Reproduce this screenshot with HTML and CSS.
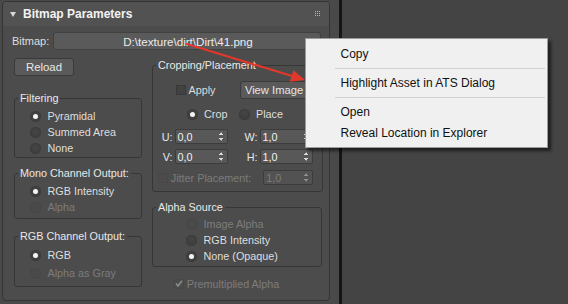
FILE: index.html
```html
<!DOCTYPE html>
<html lang="en">
<head>
    <meta charset="UTF-8">
    <title>Bitmap Parameters</title>
    <link rel="stylesheet" href="styles.css">
</head>
<body>
    <div class="screen">
        <!-- 왼쪽 롤아웃 패널 -->
        <div class="side">
            <div class="rollout">
                <div class="roll-head">
                    <svg class="tri" width="6" height="5" viewBox="0 0 6 5"><polygon points="0,0 6,0 3,5" fill="#d8d8d8"></polygon></svg>
                    <span class="roll-title">Bitmap Parameters</span>
                    <svg class="grip" width="6" height="6" viewBox="0 0 6 6" fill="#b5b5b5">
                        <rect x="0" y="0" width="1" height="1"></rect><rect x="2" y="0" width="1" height="1"></rect><rect x="4" y="0" width="1" height="1"></rect>
                        <rect x="0" y="2" width="1" height="1"></rect><rect x="2" y="2" width="1" height="1"></rect><rect x="4" y="2" width="1" height="1"></rect>
                        <rect x="0" y="4" width="1" height="1"></rect><rect x="2" y="4" width="1" height="1"></rect><rect x="4" y="4" width="1" height="1"></rect>
                    </svg>
                </div>

                <div class="roll-body">
                    <div class="bm-row">
                        <span class="bm-label">Bitmap:</span>
                        <div class="path-field">D:\texture\dirt\Dirt\41.png</div>
                    </div>

                    <div class="cols">
                        <!-- 왼쪽 컬럼 -->
                        <div class="col">
                            <div class="btn reload">Reload</div>

                            <fieldset class="group filtering">
                                <legend>Filtering</legend>
                                <div class="gbody">
                                    <div class="radio-row"><span class="radio on"></span>Pyramidal</div>
                                    <div class="radio-row"><span class="radio"></span>Summed Area</div>
                                    <div class="radio-row"><span class="radio"></span>None</div>
                                </div>
                            </fieldset>

                            <fieldset class="group mono">
                                <legend>Mono Channel Output:</legend>
                                <div class="gbody">
                                    <div class="radio-row"><span class="radio on"></span>RGB Intensity</div>
                                    <div class="radio-row off"><span class="radio"></span>Alpha</div>
                                </div>
                            </fieldset>

                            <fieldset class="group rgb">
                                <legend>RGB Channel Output:</legend>
                                <div class="gbody">
                                    <div class="radio-row tall"><span class="radio on"></span>RGB</div>
                                    <div class="radio-row tall off"><span class="radio"></span>Alpha as Gray</div>
                                </div>
                            </fieldset>
                        </div>

                        <!-- 오른쪽 컬럼 -->
                        <div class="col">
                            <fieldset class="group crop">
                                <legend>Cropping/Placement</legend>
                                <div class="gbody">
                                    <div class="apply-row">
                                        <div class="check-cell"><span class="check"></span>Apply</div>
                                        <div class="btn view-btn">View Image</div>
                                    </div>
                                    <div class="crop-row">
                                        <div class="radio-row"><span class="radio on"></span>Crop</div>
                                        <div class="radio-row"><span class="radio"></span>Place</div>
                                    </div>
                                    <div class="spin-row">
                                        <span class="spin-label">U:</span>
                                        <div class="spin"><span>0,0</span><span class="arrows"></span></div>
                                        <span class="spin-label">W:</span>
                                        <div class="spin"><span>1,0</span><span class="arrows"></span></div>
                                    </div>
                                    <div class="spin-row second">
                                        <span class="spin-label">V:</span>
                                        <div class="spin"><span>0,0</span><span class="arrows"></span></div>
                                        <span class="spin-label">H:</span>
                                        <div class="spin"><span>1,0</span><span class="arrows"></span></div>
                                    </div>
                                    <div class="jitter-row off">
                                        <div class="check-cell"><span class="check"></span>Jitter Placement:</div>
                                        <div class="spin"><span>1,0</span><span class="arrows"></span></div>
                                    </div>
                                </div>
                            </fieldset>

                            <fieldset class="group alpha">
                                <legend>Alpha Source</legend>
                                <div class="gbody">
                                    <div class="radio-row off"><span class="radio"></span>Image Alpha</div>
                                    <div class="radio-row"><span class="radio"></span>RGB Intensity</div>
                                    <div class="radio-row"><span class="radio on"></span>None (Opaque)</div>
                                </div>
                            </fieldset>

                            <div class="premult off">
                                <span class="check ticked">
                                    <svg width="8" height="7" viewBox="0 0 8 7"><polyline points="1,3.5 3,6 7,0.8" fill="none" stroke="#8c8c8c" stroke-width="1.6"></polyline></svg>
                                </span>Premultiplied Alpha
                            </div>
                        </div>
                    </div>
                </div>
            </div>
        </div>

        <!-- 뷰포트 영역 -->
        <div class="view"></div>

        <!-- 우클릭 메뉴 -->
        <div class="menu">
            <div class="menu-item">Copy</div>
            <div class="menu-sep"></div>
            <div class="menu-item">Highlight Asset in ATS Dialog</div>
            <div class="menu-sep"></div>
            <div class="menu-item">Open</div>
            <div class="menu-item">Reveal Location in Explorer</div>
        </div>

        <!-- 빨간 화살표 -->
        <svg class="arrow" width="568" height="304" viewBox="0 0 568 304">
            <line x1="187" y1="44" x2="292" y2="76" stroke="#e2382a" stroke-width="2.2" stroke-linecap="round"></line>
            <polygon points="305,80 289.9,81.8 293.4,70.2" fill="#e2382a"></polygon>
        </svg>
    </div>
</body>
</html>
```

FILE: styles.css
```css
html,body{
    margin: 0;
    padding: 0;
}
body{
    background: #444;
    font-family: "Liberation Sans", Arial, sans-serif;
    font-size: 10.8px;
    color: #dedede;
}
.screen{
    position: relative;
    display: flex;
    width: 568px;
    height: 304px;
    overflow: hidden;
}

/* 패널 */
.side{
    width: 337px;
    padding-left: 2px;
    background: #494949;
    border-right: 3px solid #151515;
}
.rollout{
    width: 328px;
    height: 300px;
    margin-top: 1px;
    box-sizing: border-box;
    border: 1px solid #343434;
    border-radius: 4px;
    background: #4c4c4c;
}
.view{
    flex: 1;
    background: #444;
}

/* 롤아웃 헤더 */
.roll-head{
    display: flex;
    align-items: center;
    height: 24px;
    padding: 0 8px 0 7px;
    background: #525252;
    border-radius: 3px 3px 0 0;
}
.roll-title{
    margin-left: 7px;
    font-size: 12px;
    font-weight: bold;
    color: #f2f2f2;
}
.grip{
    margin-left: auto;
}

.roll-body{
    padding: 6px 8px 0 9px;
}
.bm-row{
    display: flex;
    align-items: center;
    height: 18px;
}
.bm-label{
    width: 41px;
    font-size: 11px;
}
.path-field{
    flex: 1;
    height: 18px;
    box-sizing: border-box;
    border: 1px solid #414141;
    border-radius: 3px;
    background: #5a5a5a;
    display: flex;
    align-items: center;
    justify-content: center;
    padding-left: 2px;
    font-size: 11.6px;
    color: #ececec;
}

.cols{
    display: grid;
    grid-template-columns: 128px 171px;
    column-gap: 10px;
    margin: 8px 0 0 2px;
}

/* 버튼 */
.btn{
    height: 18px;
    box-sizing: border-box;
    border: 1px solid #3a3a3a;
    border-radius: 3px;
    background: #5a5a5a;
    display: flex;
    align-items: center;
    justify-content: center;
    color: #e6e6e6;
}
.reload{
    width: 60px;
    font-size: 11.4px;
}
.view-btn{
    font-size: 11.2px;
}

/* 그룹박스 */
.group{
    margin: 0;
    padding: 0;
    min-inline-size: 0;
    border: 1px solid #363636;
    border-radius: 3px;
}
.group legend{
    margin-left: 3px;
    padding: 0 2px;
    line-height: 14px;
    color: #e8e8e8;
}
.filtering{
    margin-top: 15px;
}
.filtering .gbody{
    padding: 3px 0 1px 15px;
}
.mono{
    margin-top: 8px;
}
.mono .gbody{
    padding: 3px 0 3px 15px;
}
.rgb{
    margin-top: 10px;
}
.rgb .gbody{
    padding: 3px 0 4px 15px;
}

/* 라디오 */
.radio-row{
    display: flex;
    align-items: center;
    height: 16px;
}
.radio-row.tall{
    height: 18px;
}
.radio{
    position: relative;
    width: 11px;
    height: 11px;
    margin-right: 6.5px;
    border-radius: 50%;
    background: radial-gradient(circle at 50% 40%, #454545, #3a3a3a);
    box-shadow: inset 0 0 0 1px #3d3d3d;
}
.radio.on::after{
    content: "";
    position: absolute;
    left: 3px;
    top: 3px;
    width: 5px;
    height: 5px;
    border-radius: 50%;
    background: #f4f4f4;
}
.off{
    color: #7c7c7c;
}
.off .radio{
    background: #4a4a4a;
    box-shadow: inset 0 0 0 1px #474747;
}

/* 체크박스 */
.check{
    display: inline-flex;
    align-items: center;
    justify-content: center;
    width: 10px;
    height: 10px;
    box-sizing: border-box;
    margin-right: 2.5px;
    border: 1px solid #393939;
    background: #424242;
}
.off .check{
    border-color: #474747;
    background: #4b4b4b;
}

/* 크롭 그룹 */
.crop .gbody{
    padding: 9px 0 6px 0;
}
.apply-row{
    display: grid;
    grid-template-columns: 87px 68px;
    height: 18px;
    align-items: center;
}
.check-cell{
    display: flex;
    align-items: center;
}
.apply-row .check-cell{
    padding-left: 23px;
}
.crop-row{
    display: grid;
    grid-template-columns: 85.5px 1fr;
    margin-top: 7px;
}
.crop-row .radio-row:first-child{
    padding-left: 33.5px;
}

/* 스피너 */
.spin-row{
    display: grid;
    grid-template-columns: 21.5px 53px 32px 53px;
    align-items: center;
    height: 15px;
    margin-top: 7px;
}
.spin-row.second{
    margin-top: 5px;
}
.spin-label{
    text-align: right;
    padding-right: 2px;
    color: #e8e8e8;
}
.spin{
    height: 15px;
    box-sizing: border-box;
    border: 1px solid #3c3c3c;
    border-radius: 2px;
    background: #585858;
    display: flex;
    align-items: center;
    justify-content: space-between;
    padding: 0 3px 0 2px;
    color: #f0f0f0;
}
.arrows{
    width: 5px;
    height: 9px;
    background:
        linear-gradient(to bottom right, transparent 50%, #dadada 50%) left top/2.5px 3px no-repeat,
        linear-gradient(to bottom left, transparent 50%, #dadada 50%) right top/2.5px 3px no-repeat,
        linear-gradient(to top right, transparent 50%, #dadada 50%) left bottom/2.5px 3px no-repeat,
        linear-gradient(to top left, transparent 50%, #dadada 50%) right bottom/2.5px 3px no-repeat;
}
.jitter-row{
    display: grid;
    grid-template-columns: 110.3px 49.4px;
    align-items: center;
    height: 15px;
    margin-top: 6px;
}
.jitter-row .check-cell{
    padding-left: 5.3px;
}
.jitter-row .spin{
    color: #7c7c7c;
    background: #525252;
}
.jitter-row .arrows{
    opacity: .45;
}

/* 알파 그룹 */
.alpha{
    margin: 8px 1.5px 0 0;
}
.alpha .gbody{
    padding: 2px 0 2px 33px;
}
.premult{
    display: flex;
    align-items: center;
    height: 15px;
    margin-top: 9px;
    padding-left: 22.3px;
}

/* 메뉴 */
.menu{
    position: absolute;
    left: 305px;
    top: 38px;
    width: 243px;
    box-sizing: border-box;
    padding: 4.5px 0 3px;
    border: 1px solid #9c9c9c;
    background: #f0f0f0;
    box-shadow: 3px 3px 3px rgba(0,0,0,.55);
    font-size: 12px;
    color: #111;
}
.menu-item{
    height: 21px;
    line-height: 21px;
    padding-left: 34.5px;
}
.menu-sep{
    height: 1px;
    margin: 3.5px 2px 3.5px 29px;
    background: #d2d2d2;
}

.arrow{
    position: absolute;
    left: 0;
    top: 0;
    pointer-events: none;
}
```
